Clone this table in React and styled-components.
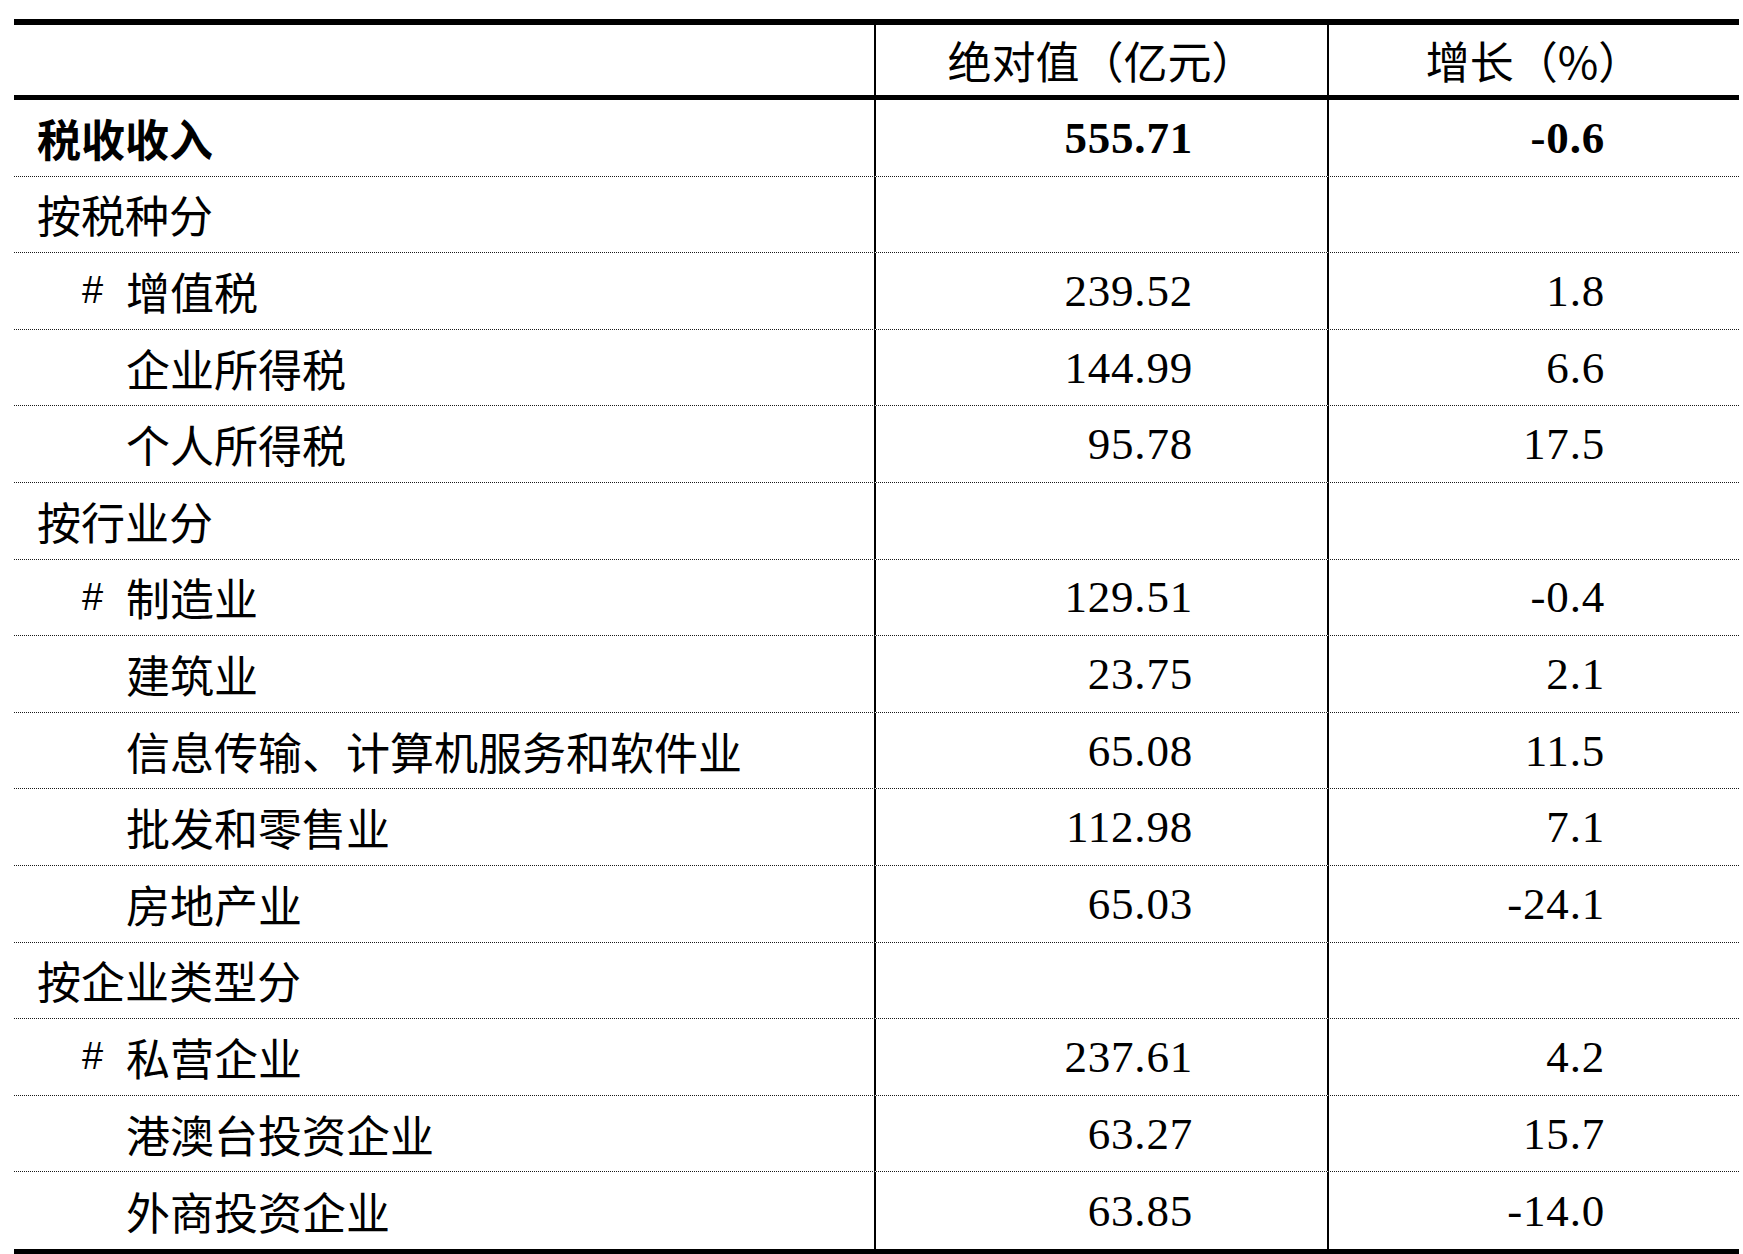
import React from "react";
import styled, { createGlobalStyle } from "styled-components";

const GlobalStyle = createGlobalStyle`
  html, body {
    margin: 0;
    padding: 0;
    background: #ffffff;
  }
  body {
    font-family: "Noto Sans CJK SC", "Liberation Serif", sans-serif;
    color: #000;
  }
`;

const Page = styled.div`
  padding: 19px 0 0 14px;
  width: 1725px;
`;

const Table = styled.div`
  width: 1725px;
  border-top: 6px solid #000;
  border-bottom: 5px solid #000;
`;

const GridRow = styled.div`
  display: grid;
  grid-template-columns: 860px 453px 412px;
  box-sizing: border-box;
`;

const HeaderRow = styled(GridRow)`
  height: 75px;
  border-bottom: 5px solid #000;
`;

const BodyRow = styled(GridRow)`
  height: 76.6px;
  border-bottom: 1px dotted #1a1a1a;
  &:last-child {
    border-bottom: none;
  }
`;

const Cell = styled.div`
  display: flex;
  align-items: center;
  box-sizing: border-box;
  border-left: ${(p) => (p.$divided ? "2px solid #000" : "none")};
  min-width: 0;
`;

const HeaderCell = styled(Cell)`
  justify-content: center;
  font-family: "Noto Sans CJK SC", sans-serif;
  font-size: 44px;
  font-weight: 400;
`;

const LabelCell = styled(Cell)`
  padding-left: ${(p) => (p.$level === 0 ? "23px" : "68px")};
  font-family: "Noto Sans CJK SC", sans-serif;
  font-size: 44px;
  font-weight: ${(p) => (p.$bold ? 700 : 400)};
  white-space: nowrap;
`;

const Hash = styled.span`
  display: inline-block;
  width: 44px;
  font-family: "Liberation Sans", sans-serif;
  font-size: 38px;
`;

const NumberCell = styled(Cell)`
  justify-content: flex-end;
  padding-right: 134px;
  font-family: "Liberation Serif", serif;
  font-size: 45px;
  font-weight: ${(p) => (p.$bold ? 700 : 400)};
  letter-spacing: 0.8px;
`;

const rows = [
  { label: "税收收入", v: "555.71", g: "-0.6", bold: true, level: 0 },
  { label: "按税种分", level: 0 },
  { label: "增值税", hash: true, v: "239.52", g: "1.8", level: 1 },
  { label: "企业所得税", v: "144.99", g: "6.6", level: 1 },
  { label: "个人所得税", v: "95.78", g: "17.5", level: 1 },
  { label: "按行业分", level: 0 },
  { label: "制造业", hash: true, v: "129.51", g: "-0.4", level: 1 },
  { label: "建筑业", v: "23.75", g: "2.1", level: 1 },
  { label: "信息传输、计算机服务和软件业", v: "65.08", g: "11.5", level: 1 },
  { label: "批发和零售业", v: "112.98", g: "7.1", level: 1 },
  { label: "房地产业", v: "65.03", g: "-24.1", level: 1 },
  { label: "按企业类型分", level: 0 },
  { label: "私营企业", hash: true, v: "237.61", g: "4.2", level: 1 },
  { label: "港澳台投资企业", v: "63.27", g: "15.7", level: 1 },
  { label: "外商投资企业", v: "63.85", g: "-14.0", level: 1 },
];

export default function App() {
  return (
    <>
      <GlobalStyle />
      <Page>
        <Table>
          <HeaderRow>
            <HeaderCell />
            <HeaderCell $divided>绝对值（亿元）</HeaderCell>
            <HeaderCell $divided>增长（%）</HeaderCell>
          </HeaderRow>
          {rows.map((r) => (
            <BodyRow key={r.label}>
              <LabelCell $level={r.level} $bold={r.bold}>
                {r.level === 1 && <Hash>{r.hash ? "#" : ""}</Hash>}
                {r.label}
              </LabelCell>
              <NumberCell $divided $bold={r.bold}>
                {r.v || ""}
              </NumberCell>
              <NumberCell $divided $bold={r.bold}>
                {r.g || ""}
              </NumberCell>
            </BodyRow>
          ))}
        </Table>
      </Page>
    </>
  );
}
